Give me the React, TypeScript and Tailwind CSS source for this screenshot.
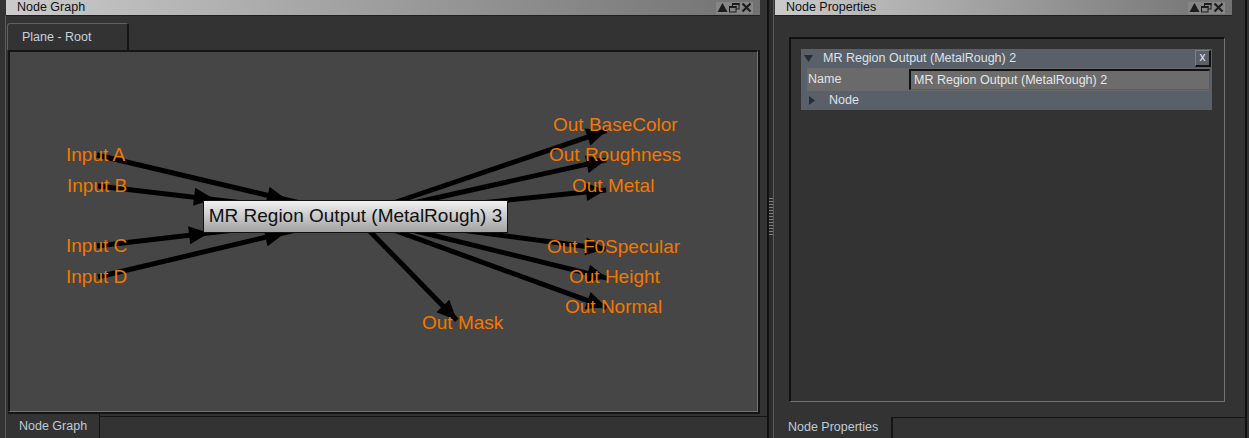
import React from 'react'

type Pt = [number, number]

// canvas inner top-left, in page pixels
const ORIGIN: Pt = [10, 52]
const CENTER: Pt = [355, 216]

const inputs: { label: string; x: number; y: number; w: number; tip: Pt }[] = [
  { label: 'Input A', x: 66, y: 155, w: 62, tip: [287, 200] },
  { label: 'Input B', x: 67, y: 186, w: 62, tip: [214, 199] },
  { label: 'Input C', x: 66, y: 246, w: 62, tip: [209, 233] },
  { label: 'Input D', x: 66, y: 277, w: 64, tip: [285, 233] },
]

const outputs: { label: string; x: number; y: number; w: number }[] = [
  { label: 'Out BaseColor', x: 553, y: 125, w: 122 },
  { label: 'Out Roughness', x: 549, y: 155, w: 130 },
  { label: 'Out Metal', x: 572, y: 186, w: 84 },
  { label: 'Out F0Specular', x: 547, y: 247, w: 133 },
  { label: 'Out Height', x: 569, y: 277, w: 92 },
  { label: 'Out Normal', x: 565, y: 307, w: 98 },
  { label: 'Out Mask', x: 422, y: 323, w: 81 },
]

function head(from: Pt, tip: Pt, len = 20, w = 9) {
  const dx = tip[0] - from[0]
  const dy = tip[1] - from[1]
  const d = Math.hypot(dx, dy)
  const ux = dx / d
  const uy = dy / d
  const bx = tip[0] - ux * len
  const by = tip[1] - uy * len
  return `${tip[0]},${tip[1]} ${bx - uy * w},${by + ux * w} ${bx + uy * w},${by - ux * w}`
}

function outTip(c: Pt): Pt {
  const dx = c[0] - CENTER[0]
  const dy = c[1] - CENTER[1]
  const d = Math.hypot(dx, dy)
  return [c[0] - (dx / d) * 8, c[1] - (dy / d) * 8 + 3]
}

const TitleIcons = () => (
  <div className="flex items-center gap-[1px] bg-[#868686] h-[12px] px-[1px]">
    <svg width="11" height="11" viewBox="0 0 11 11">
      <polygon points="5.5,1 10.5,10 0.5,10" fill="#1c1c1c" />
    </svg>
    <svg width="11" height="11" viewBox="0 0 11 11">
      <rect x="3.5" y="1.5" width="6.5" height="5.5" fill="none" stroke="#1c1c1c" />
      <rect x="3" y="1" width="7.5" height="2" fill="#1c1c1c" />
      <rect x="0.5" y="4.5" width="6.5" height="5.5" fill="#868686" stroke="#1c1c1c" />
      <rect x="0" y="4" width="7.5" height="2" fill="#1c1c1c" />
    </svg>
    <svg width="11" height="11" viewBox="0 0 11 11">
      <path d="M1.5 1.5 L9.5 9.5 M9.5 1.5 L1.5 9.5" stroke="#1c1c1c" strokeWidth="2.2" />
    </svg>
  </div>
)

const TitleBar = ({ title }: { title: string }) => (
  <div className="h-[16px] border-b border-[#202020] bg-linear-to-r from-[#cbcbcb] to-[#727272] flex items-center justify-between">
    <span className="pl-[11px] text-[12.5px] leading-none text-[#111]">{title}</span>
    <div className="pr-[7px]">
      <TitleIcons />
    </div>
  </div>
)

const GraphCanvas = () => (
  <div className="relative w-[747px] h-[359px] bg-[#464646] overflow-hidden">
    <svg className="absolute inset-0" width="747" height="359" viewBox="10 52 747 359">
      {inputs.map((i) => {
        const c: Pt = [i.x + i.w / 2, i.y]
        return (
          <g key={i.label}>
            <line x1={c[0]} y1={c[1]} x2={CENTER[0]} y2={CENTER[1]} stroke="#000" strokeWidth="5" />
            <polygon points={head(c, i.tip)} fill="#000" />
          </g>
        )
      })}
      {outputs.map((o) => {
        const tip = outTip([o.x + o.w / 2, o.y])
        return (
          <g key={o.label}>
            <line x1={CENTER[0]} y1={CENTER[1]} x2={tip[0]} y2={tip[1]} stroke="#000" strokeWidth="5" />
            <polygon points={head(CENTER, tip)} fill="#000" />
          </g>
        )
      })}
    </svg>

    {[...inputs, ...outputs].map((l) => (
      <div
        key={l.label}
        className="absolute text-[19px] leading-[20px] text-[#f27800] whitespace-nowrap"
        style={{ left: l.x - ORIGIN[0], top: l.y - 10 - ORIGIN[1] }}
      >
        {l.label}
      </div>
    ))}

    <div
      className="absolute w-[305px] h-[33px] border border-[#111] bg-linear-to-b from-[#f2f2f2] to-[#a2a2a2] flex items-center justify-center text-[19px] text-[#111] whitespace-nowrap"
      style={{ left: 203 - ORIGIN[0], top: 200 - ORIGIN[1] }}
    >
      MR Region Output (MetalRough) 3
    </div>
  </div>
)

const NodeGraphPanel = () => (
  <div className="w-[769px] h-full flex flex-col border-r-2 border-[#111]">
    <div className="pl-[6px] pr-[7px]">
      <TitleBar title="Node Graph" />
    </div>
    <div className="flex-1 ml-[5px] border-l border-[#5a5a5a] flex flex-col">
      <div className="h-[34px] pt-[7px] pl-[1px] flex">
        <div className="w-[122px] h-[27px] rounded-t-[3px] border-t border-l border-[#606060] border-r-2 border-r-[#151515] flex items-center pl-[14px] text-[12.5px] text-[#c6d2dc]">
          Plane - Root
        </div>
      </div>
      <div className="ml-[2px] w-[752px] border-r-2 border-b-2 border-[#151515]">
        <div className="border-t-2 border-l-2 border-t-[#151515] border-l-[#151515] border-r border-b border-r-[#727272] border-b-[#727272]">
          <GraphCanvas />
        </div>
      </div>
      <div className="flex-1 flex">
        <div className="w-[94px] border-r border-[#151515] flex items-center pl-[13px] text-[12.5px] text-[#bccbd8]">
          Node Graph
        </div>
        <div className="flex-1 mt-[2px] border-t border-[#151515]" />
      </div>
    </div>
  </div>
)

const Splitter = () => (
  <div className="w-[4px] h-full bg-[#2c2c2c] flex flex-col justify-start pt-[198px]">
    {Array.from({ length: 13 }).map((_, i) => (
      <div key={i} className="h-[1px] mb-[2px] bg-[#808080]" />
    ))}
  </div>
)

const NodePropertiesPanel = () => (
  <div className="w-[474px] h-full flex flex-col border-l border-[#5c5c5c] border-r-2 border-r-[#111]">
    <div className="pl-[1px] pr-[13px]">
      <TitleBar title="Node Properties" />
    </div>
    <div className="ml-[15px] mt-[21px] w-[436px] h-[365px] border-t-2 border-l-2 border-t-[#111] border-l-[#111] border-r border-b border-r-[#747474] border-b-[#747474]">
      <div className="ml-[10px] mt-[10px] w-[411px] bg-[#59606a] text-[12.5px] pb-[1px]">
        <div className="h-[19px] flex items-center relative">
          <svg className="ml-[3px]" width="9" height="7" viewBox="0 0 9 7">
            <polygon points="0,0 9,0 4.5,7" fill="#2a2d31" />
          </svg>
          <span className="ml-[10px] text-[#dde2e8]">MR Region Output (MetalRough) 2</span>
          <div className="absolute right-[1px] top-[1px] w-[16px] h-[17px] border-t border-l border-[#7a8088] border-r-2 border-b-2 border-r-[#111] border-b-[#111] flex items-center justify-center text-[12px] leading-none text-[#e4e8ec] pb-[2px]">
            x
          </div>
        </div>
        <div className="ml-[6px] mr-[2px] h-[23px] bg-[#6a6a6a] flex items-center">
          <span className="w-[102px] pl-[1px] text-[#e2e2e2]">Name</span>
          <div className="flex-1 h-[21px] border-t-2 border-l-2 border-[#111] border-r border-b border-r-[#5a5a5a] border-b-[#5a5a5a] bg-[#6c6c6c] flex items-center pl-[3px] text-[#e6e6e6]">
            MR Region Output (MetalRough) 2
          </div>
        </div>
        <div className="h-[18px] flex items-center">
          <svg className="ml-[8px]" width="6" height="9" viewBox="0 0 6 9">
            <polygon points="0,0 6,4.5 0,9" fill="#2a2d31" />
          </svg>
          <span className="ml-[14px] text-[#dde2e8]">Node</span>
        </div>
      </div>
    </div>
    <div className="flex-1 flex items-end">
      <div className="h-[21px] w-full flex">
        <div className="w-[119px] border-r-2 border-[#151515] flex items-center pl-[14px] text-[12.5px] text-[#bccbd8]">
          Node Properties
        </div>
        <div className="flex-1 border-t border-[#151515]" />
      </div>
    </div>
  </div>
)

export default function App() {
  return (
    <div className="w-[1249px] h-[438px] bg-[#333333] flex overflow-hidden font-['Liberation_Sans',Arial,sans-serif]">
      <NodeGraphPanel />
      <Splitter />
      <NodePropertiesPanel />
    </div>
  )
}
